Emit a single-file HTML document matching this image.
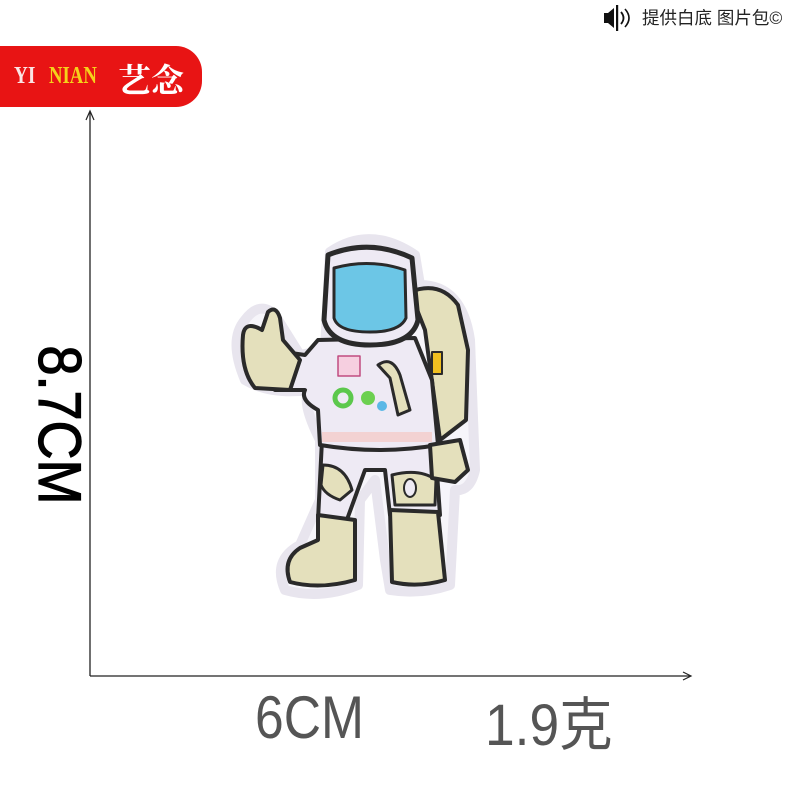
<!DOCTYPE html>
<html><head><meta charset="utf-8"><style>
html,body{margin:0;padding:0;background:#fff;}
body{width:788px;height:788px;position:relative;overflow:hidden;font-family:"Liberation Sans","Noto Sans CJK SC",sans-serif;}
.t{position:absolute;white-space:nowrap;}
</style></head><body>
<div class="t" style="left:642px;top:5px;font-size:17.5px;color:#222;letter-spacing:0px">提供白底 图片包©</div>
<svg style="position:absolute;left:602px;top:3px" width="36" height="30" viewBox="0 0 36 30">
<path d="M2 10h4l6-5v20l-6-5H2z" fill="#111"/><rect x="14" y="2" width="2.2" height="26" fill="#111"/>
<path d="M19 9q5 6 0 12" stroke="#111" stroke-width="1.8" fill="none"/>
<path d="M23 6q8 9 0 18" stroke="#111" stroke-width="1.6" fill="none"/>
</svg>
<div style="position:absolute;left:0;top:46px;width:202px;height:61px;background:#e81414;border-radius:0 26px 26px 0"></div>
<div class="t" style="left:14px;top:63px;font-family:'Liberation Serif',serif;font-weight:bold;font-size:24px;color:#fbe4e4;transform:scaleX(0.8);transform-origin:left">YI</div>
<div class="t" style="left:49px;top:63px;font-family:'Liberation Serif',serif;font-weight:bold;font-size:24px;color:#f5d21a;transform:scaleX(0.78);transform-origin:left">NIAN</div>
<div class="t" style="left:118px;top:55px;font-family:'Noto Serif CJK SC',serif;font-weight:bold;font-size:33px;color:#fff">艺念</div>
<svg style="position:absolute;left:0;top:0" width="788" height="788">
<line x1="90" y1="112" x2="90" y2="676" stroke="#222" stroke-width="1.3"/>
<path d="M86 120L90 111L94 120" stroke="#222" fill="none" stroke-width="1.2"/>
<line x1="90" y1="676" x2="690" y2="676" stroke="#222" stroke-width="1.3"/>
<path d="M683 672L691 676L683 680" stroke="#222" fill="none" stroke-width="1.2"/>
<g stroke-linejoin="round">
<path d="M330 252Q370 225 415 255L420 285Q462 285 470 340L475 470Q470 492 455 490L450 585Q420 595 390 590L385 560L375 480L360 500L358 585Q320 600 285 590Q272 560 300 545L320 500L320 440Q300 400 310 390Q270 395 245 380Q228 340 245 320Q260 300 275 315L300 355L325 350Z" fill="#f6f5fa" stroke="#e8e5ee" stroke-width="10"/>
<path d="M410 292Q440 280 458 305L468 350L466 420L440 440L425 330Z" fill="#e4e0bc" stroke="#2a2a2a" stroke-width="4"/>
<rect x="432" y="352" width="10" height="22" fill="#f0c020" stroke="#2a2a2a" stroke-width="2"/>
<path d="M322 440L318 520L345 525L365 470L385 470L390 515L440 515L435 445Z" fill="#eeeaf4" stroke="#2a2a2a" stroke-width="4"/>
<path d="M323 465Q345 465 352 490L340 500Q325 495 321 485Z" fill="#e4e0bc" stroke="#2a2a2a" stroke-width="3"/>
<path d="M392 475Q420 468 436 480L435 505L395 505Z" fill="#e4e0bc" stroke="#2a2a2a" stroke-width="3"/>
<ellipse cx="410" cy="488" rx="6" ry="9" fill="#eeeaf4" stroke="#2a2a2a" stroke-width="2"/>
<path d="M318 515L355 520L355 580Q320 590 290 582Q282 560 300 548L318 540Z" fill="#e4e0bc" stroke="#2a2a2a" stroke-width="4"/>
<path d="M390 510L438 512L445 580Q418 588 392 582Z" fill="#e4e0bc" stroke="#2a2a2a" stroke-width="4"/>
<path d="M318 340L415 338L432 380L438 445Q380 455 320 445L318 410Q300 400 305 390L275 390Q255 375 270 350L305 355Z" fill="#eeeaf4" stroke="#2a2a2a" stroke-width="4"/>
<rect x="322" y="432" width="110" height="10" fill="#f3d2d2"/>
<path d="M430 445L460 440L468 470L455 482L432 478Z" fill="#e4e0bc" stroke="#2a2a2a" stroke-width="4"/>
<path d="M243 335Q245 320 262 330L268 312Q276 305 280 318L283 340L300 360L290 390L255 388Q240 370 243 335Z" fill="#e4e0bc" stroke="#2a2a2a" stroke-width="4"/>
<rect x="338" y="356" width="22" height="20" fill="#f6cfe0" stroke="#c04c80" stroke-width="1.5"/>
<circle cx="343" cy="398" r="8" fill="none" stroke="#5cc84c" stroke-width="5"/>
<circle cx="368" cy="398" r="7" fill="#6cd050"/>
<circle cx="382" cy="406" r="5" fill="#5ab8e6"/>
<path d="M378 365Q392 355 400 375L410 410L398 415L390 378Z" fill="#e4e0bc" stroke="#2a2a2a" stroke-width="3"/>
<path d="M328 255Q370 238 412 258L418 320Q412 345 370 345Q330 345 324 320Z" fill="#eeeaf4" stroke="#2a2a2a" stroke-width="5"/>
<path d="M334 268Q370 258 405 270L406 318Q400 332 370 332Q338 332 334 318Z" fill="#6cc6e6" stroke="#2a2a2a" stroke-width="3"/>
</g>
</svg>
<div class="t" style="font-size:60px;line-height:60px;color:#000;-webkit-text-stroke:1.2px #000;transform:translate(-50%,-50%) rotate(90deg) scaleX(0.9);transform-origin:center;left:59px;top:425px">8.7CM</div>
<div class="t" style="left:255px;top:683px;font-size:60px;color:#555;transform:scaleX(0.86);transform-origin:left">6CM</div>
<div class="t" style="left:485px;top:678px;font-size:58px;color:#555;transform:scaleX(0.92);transform-origin:left">1.9克</div>
</body></html>
